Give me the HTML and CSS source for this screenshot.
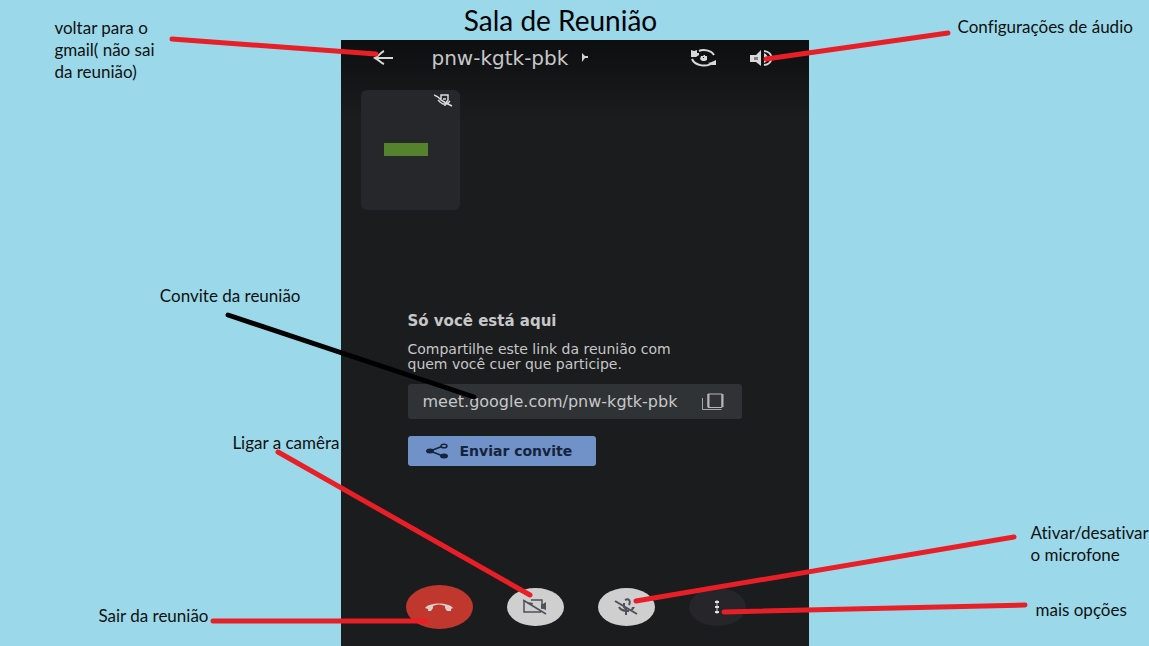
FILE: index.html
```html
<!DOCTYPE html>
<html lang="pt-BR">
<head>
<meta charset="utf-8">
<meta name="viewport" content="width=device-width, initial-scale=1">
<title>Sala de Reunião</title>
<link rel="stylesheet" href="styles.css">
</head>
<body>
<h1 class="page-title">Sala de Reunião</h1>
<div class="board">
  <aside class="side side-left">
    <p class="note note-back">voltar para o<br>gmail( não sai<br>da reunião)</p>
    <p class="note note-invite">Convite da reunião</p>
    <p class="note note-camera">Ligar a camêra</p>
    <p class="note note-leave">Sair da reunião</p>
  </aside>
  <main class="phone">
    <header class="topbar">
      <button class="icon-button" aria-label="Voltar">
        <svg width="22" height="16" viewBox="0 0 22 16"><path d="M20 8H3M11 1C8 2 6 6 2 8c4 2 6 5 9 6" fill="none" stroke="#d6d6d6" stroke-width="2"/></svg>
      </button>
      <h2 class="code">pnw-kgtk-pbk <svg width="6" height="10" viewBox="0 0 6 10"><path d="M0 0l3 3h3v2H3L0 9z" fill="#d0d0d0"/></svg></h2>
      <button class="icon-button" aria-label="Alternar câmera">
        <svg width="26" height="18" viewBox="0 0 26 18"><g fill="none" stroke="#d8d8d8" stroke-width="2"><path d="M8 2C12 0 20 1 23 6M1 10c3 7 15 9 22 3"/></g><path d="M0 1l3 1 3-1v3h2v2l-3 2H0zM25 11v5h-4l-4-2 4-1z" fill="#d8d8d8"/><path d="M10 7h2l1-1h1v1h2v4l-2 1h-3l-2-2z" fill="#d8d8d8"/><path d="M12 8h1v1h-1z" fill="#202122"/></svg>
      </button>
      <button class="icon-button" aria-label="Áudio">
        <svg width="26" height="18" viewBox="0 0 26 18"><path d="M0 6h6l5-5v16l-5-4H0z" fill="#d8d8d8"/><path d="M4 8h4v3H4z" fill="#808182"/><path d="M14 4c5 2 5 8 0 10z" fill="#d8d8d8"/><path d="M14 2c10 1 10 13 0 14" fill="none" stroke="#d8d8d8" stroke-width="2"/></svg>
      </button>
    </header>

    <div class="tile">
      <svg class="tile-mic" width="19" height="13" viewBox="0 0 19 13"><path d="M0 1l4 2 3 3 5 3 6 3M7 5V1h7v5l-2 3M4 6l2 2 3 2h4l3-3M9 5h3M11 10v2" fill="none" stroke="#dadada" stroke-width="1.500"/></svg>
      <div class="avatar"></div>
    </div>

    <section class="invite">
      <h3 class="invite-title">Só você está aqui</h3>
      <p class="invite-text">Compartilhe este link da reunião com<br>quem você cuer que participe.</p>
      <div class="link-box">
        <span>meet.google.com/pnw-kgtk-pbk</span>
        <button class="icon-button" aria-label="Copiar link">
          <svg width="22" height="18" viewBox="0 0 22 18"><path d="M.5 5v11.500h19" fill="none" stroke="#a4a6a7"/><path d="M6 1v13.500h14V1z" fill="none" stroke="#b4b6b7"/><path d="M6.500 1v13M20.500 1v13" stroke="#b4b6b7" stroke-width="2"/></svg>
        </button>
      </div>
      <button class="share">
        <svg width="22" height="16" viewBox="0 0 22 16"><path d="M17 3L4 8l13 5" fill="none" stroke="#15243a" stroke-width="1.500"/><ellipse cx="4" cy="8" rx="4" ry="2.500" fill="#15243a"/><ellipse cx="18" cy="3" rx="3" ry="1.800" fill="#7191c9" stroke="#15243a" stroke-width="1.500"/><ellipse cx="18" cy="13" rx="4" ry="2.500" fill="#15243a"/></svg>
        Enviar convite
      </button>
    </section>

    <footer class="controls">
      <button class="control control-leave" aria-label="Sair da reunião">
        <svg width="28" height="10" viewBox="0 0 28 10"><path d="M0 6C4 0 24 0 28 6l-2 1v2h-4l-2-3V4C16 2 12 2 8 4v2L6 9H3V7z" fill="#d9cfcd"/></svg>
      </button>
      <button class="control" aria-label="Ligar a câmera">
        <svg width="24" height="16" viewBox="0 0 24 16"><g fill="none" stroke="#505158" stroke-width="1.500"><path d="M1 1v12h17M8 1h11v9M0 1l23 14"/></g><path d="M5 3l5 1-1 3zM18 5h2l3-2v8l-5-2z" fill="#505158"/></svg>
      </button>
      <button class="control" aria-label="Ativar microfone">
        <svg width="24" height="18" viewBox="0 0 24 18"><g fill="none" stroke="#505158" stroke-width="2"><path d="M1 3l22 13M11 2c4-2 6 1 4 5M10 5v4l3 3M5 9c2 4 6 4 10 4M12 13v4"/></g><path d="M18 9h3l-2 3h-2z" fill="#505158"/></svg>
      </button>
      <button class="control control-more" aria-label="Mais opções">
        <svg width="6" height="14" viewBox="0 0 6 14"><path d="M2 0h2v14H2z" fill="#77787b"/><path d="M1 1h4v2H1zM1 6h4v2H1zM1 11h4v2H1z" fill="#dedede"/></svg>
      </button>
    </footer>
  </main>
  <aside class="side side-right">
    <p class="note note-audio">Configurações de áudio</p>
    <p class="note note-mic">Ativar/desativar<br>o microfone</p>
    <p class="note note-more">mais opções</p>
  </aside>
  <svg class="pointers" viewBox="0 0 1149 606" preserveAspectRatio="xMidYMin meet" aria-hidden="true">
    <g fill="none" stroke="#e91f27" stroke-width="5" stroke-linecap="round">
      <path d="M172 -1L376 14M948 -7L766 19M278 412L530 555M1014 497L636 561M1025 565L724 572M213 581H426"/>
      <path d="M228 275L474 357" stroke="#000"/>
    </g>
  </svg>
</div>
</body>
</html>
```

FILE: styles.css
```css
* {
  box-sizing: border-box;
}

body {
  margin: 0;
  min-height: 100vh;
  display: flex;
  flex-direction: column;
  background: #9bd9ea;
  color: #101010;
  font: 17px/22px Lato, sans-serif;
  font-variant-ligatures: none;
  overflow-x: hidden;
}

h1, h2, h3, p {
  margin: 0;
  font-weight: 400;
}

button {
  border: 0;
  padding: 0;
  color: inherit;
  font: inherit;
  cursor: pointer;
}

svg {
  display: block;
}

.page-title {
  height: 40px;
  padding-right: 28px;
  color: #000;
  font-size: 28px;
  line-height: 40px;
  text-align: center;
}

.board {
  position: relative;
  flex: 1;
  display: grid;
  grid-template-columns: minmax(0, 1fr) minmax(0, 468px) minmax(0, 1fr);
}

.side {
  position: relative;
}

/* Callout labels, pinned relative to the phone edges */
.note {
  position: absolute;
  white-space: nowrap;
}

.note-back { top: -23px; right: 186px; }
.note-invite { top: 245px; right: 40px; }
.note-camera { top: 392px; right: 1px; }
.note-leave { top: 565px; right: 132px; }
.note-audio { top: -24px; left: 149px; }
.note-mic { top: 482px; left: 222px; }
.note-more { top: 559px; left: 227px; }

.pointers {
  position: absolute;
  top: 0;
  left: 0;
  width: 100%;
  overflow: visible;
  pointer-events: none;
}

.phone {
  display: flex;
  flex-direction: column;
  padding-bottom: 17px;
  background: linear-gradient(#0d0e0f, #1b1c1d 80px);
  color: #c6c7c8;
  font-family: "DejaVu Sans", sans-serif;
}

.icon-button {
  background: none;
}

.topbar {
  display: flex;
  align-items: center;
  gap: 33px;
  height: 36px;
  padding: 0 33px 0 32px;
}

.code {
  display: flex;
  flex: 1;
  align-items: center;
  gap: 14px;
  padding-left: 4px;
  font-size: 20px;
  line-height: 24px;
}

.tile {
  display: flex;
  flex-direction: column;
  align-items: center;
  width: 99px;
  height: 120px;
  margin: 14px 0 0 20px;
  padding: 4px 7px;
  border-radius: 6px;
  background: #26272a;
}

.tile-mic {
  align-self: flex-end;
}

.avatar {
  width: 44px;
  height: 13px;
  margin: 36px 8px 0 0;
  background: #55822d;
}

.invite {
  margin: 100px 67px 0;
}

.invite-title {
  font-size: 15px;
  font-weight: 700;
  line-height: 22px;
}

.invite-text {
  margin-top: 10px;
  font-size: 14px;
  line-height: 15px;
}

.link-box {
  display: flex;
  align-items: center;
  justify-content: space-between;
  height: 35px;
  margin-top: 12px;
  padding: 0 18px 0 15px;
  border-radius: 3px;
  background: #303336;
  font-size: 16px;
}

.share {
  display: flex;
  align-items: center;
  gap: 12px;
  min-width: 188px;
  height: 30px;
  margin-top: 17px;
  padding: 0 18px;
  border-radius: 3px;
  background: #7191c9;
  color: #15243a;
  font-size: 14px;
  font-weight: 700;
}

.controls {
  display: flex;
  align-items: center;
  gap: 34px;
  margin: auto 60px 0 65px;
}

.control {
  display: grid;
  place-items: center;
  width: 57px;
  height: 38px;
  border-radius: 50%;
  background: #cfcfcf;
}

.control-leave {
  width: 67px;
  height: 44px;
  background: #c0372d;
}

.control-more {
  background: #262529;
}
```
